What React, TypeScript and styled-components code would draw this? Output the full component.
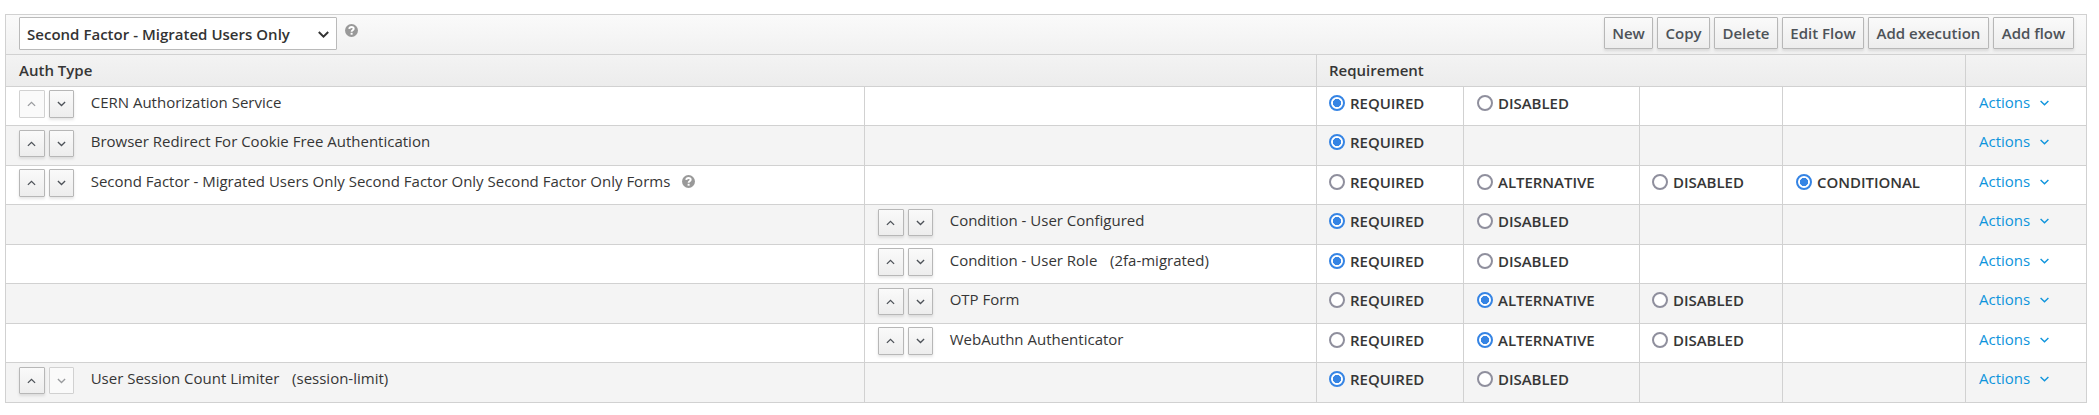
import React from 'react';
import styled, { createGlobalStyle } from 'styled-components';

const GlobalStyle = createGlobalStyle`
  * { box-sizing: border-box; }
  body {
    margin: 0;
    background: #fff;
    color: #363636;
    font: 15px/20px "Open Sans", "Liberation Sans", sans-serif;
  }
`;

const LINE = '#d1d1d1';
const COLUMNS = '859px 452px 147px 176px 143px 183px 121px';

const Page = styled.main`
  padding: 14px 12px 12px 5px;
`;

const Table = styled.section`
  width: 2082px;
  border: 1px solid ${LINE};
  border-width: 1px 0 0 1px;
`;

const Toolbar = styled.header`
  display: flex;
  align-items: flex-start;
  height: 40px;
  padding: 2px 12px 0 13px;
  border: 1px solid ${LINE};
  border-width: 0 1px 1px 0;
  background: linear-gradient(#fafafa, #f1f1f1);
`;

const FlowSelect = styled.button`
  display: flex;
  align-items: center;
  justify-content: space-between;
  width: 318px;
  height: 33px;
  padding: 0 7px 0 7px;
  border: 1px solid #bababa;
  border-radius: 1px;
  background: #fff;
  color: #333;
  font: inherit;
  font-weight: 600;
  letter-spacing: 0.02px;
`;

const SelectArrow = styled.svg`
  display: block;
  width: 11px;
  height: 7px;
  margin-top: 1px;
`;

const HelpMark = styled.svg<{ $top: number; $left: number }>`
  display: block;
  flex: none;
  width: 13px;
  height: 13px;
  margin: ${p => p.$top}px 0 0 ${p => p.$left}px;
`;

const ButtonGroup = styled.div`
  display: flex;
  gap: 4px;
  margin-left: auto;
`;

const Button = styled.button<{ $width: number }>`
  width: ${p => p.$width}px;
  height: 32px;
  padding: 0 0 1px;
  border: 1px solid #b7b7b7;
  border-radius: 1px;
  background: linear-gradient(#fafafa, #ededed);
  box-shadow: 0 2px 3px rgba(3, 3, 3, 0.1);
  color: #4d5258;
  font: inherit;
  font-weight: 600;
  white-space: nowrap;
`;

const HeadRow = styled.div`
  display: grid;
  grid-template-columns: 1311px 649px 121px;
  height: 32px;
  background: linear-gradient(#f3f3f3, #ececec);
`;

const HeadCell = styled.div<{ $pad: number }>`
  padding: 5px 0 0 ${p => p.$pad}px;
  border: 1px solid ${LINE};
  border-width: 0 1px 1px 0;
  font-weight: 600;
`;

const Row = styled.div<{ $even: boolean }>`
  display: grid;
  grid-template-columns: ${COLUMNS};
  height: ${p => (p.$even ? 40 : 39)}px;
  background: ${p => (p.$even ? '#f4f4f4' : '#fff')};
`;

const Cell = styled.div<{ $pad?: number }>`
  display: flex;
  align-items: flex-start;
  padding-left: ${p => p.$pad ?? 13}px;
  border: 1px solid ${LINE};
  border-width: 0 1px 1px 0;
`;

const Arrows = styled.div<{ $even: boolean }>`
  display: grid;
  grid-template-columns: 26px 25px;
  grid-auto-rows: ${p => (p.$even ? 27 : 28)}px;
  column-gap: 4px;
  margin: ${p => (p.$even ? 4 : 3)}px 16.7px 0 0;
`;

const ArrowButton = styled.button`
  display: flex;
  align-items: center;
  justify-content: center;
  padding: 0 0.5px 0 0;
  border: 1px solid #b7b7b7;
  border-radius: 1px;
  background: linear-gradient(#fafafa, #ededed);
  box-shadow: 0 2px 3px rgba(3, 3, 3, 0.1);
  color: #4d5258;

  &:disabled {
    border-color: #d1d1d1;
    background: #fafafa;
    box-shadow: none;
    color: #999b9e;
  }
`;

const Name = styled.span`
  padding-top: 5px;
  white-space: pre;
`;

const Alias = styled.span`
  padding-left: 1px;
`;

const Option = styled.label`
  display: flex;
  gap: 5px;
  padding-top: 6px;
  font-weight: 600;
  letter-spacing: -0.03px;
`;

const Radio = styled.input`
  appearance: none;
  flex: none;
  width: 16px;
  height: 16px;
  margin: 2px 0 0;
  border: 2px solid #8f8f9d;
  border-radius: 50%;
  background: #fff;

  &:checked {
    border-color: #3584e4;
    background: radial-gradient(circle, #3584e4 3.8px, #fff 4.4px);
  }
`;

const ActionsLink = styled.a`
  display: flex;
  gap: 10px;
  padding-top: 5px;
  color: #0e94dc;
`;

const ActionsArrow = styled.svg`
  width: 9px;
  height: 6px;
  margin-top: 8px;
`;

const Angle = ({ up }: { up?: boolean }) => (
  <svg width="9" height="6" viewBox="0 0 9 6" fill="none" stroke="currentColor" strokeWidth="1.3">
    <path d={up ? 'M.9 4.9 4.5 1.4 8.1 4.9' : 'M.9 1 4.5 4.5 8.1 1'} />
  </svg>
);

const Help = ({ top, left }: { top: number; left: number }) => (
  <HelpMark $top={top} $left={left} viewBox="0 0 13 13" aria-label="Help">
    <circle cx="6.5" cy="6.5" r="6.5" fill="#999" />
    <path d="M4.2 4.9C4.4 3.6 5.2 3 6.5 3s2.2.7 2.2 1.8c0 1.5-2.1 1.4-2.1 2.9" fill="none" stroke="#fff" strokeWidth="1.9" />
    <path d="M5.6 8.8h2v1.9h-2z" fill="#fff" />
  </HelpMark>
);

type Execution = {
  name: string;
  alias?: string;
  nested?: boolean;
  help?: boolean;
  first?: boolean;
  last?: boolean;
  options: string[];
  selected: string;
};

const EXECUTIONS: Execution[] = [
  { name: 'CERN Authorization Service', first: true, options: ['REQUIRED', 'DISABLED'], selected: 'REQUIRED' },
  { name: 'Browser Redirect For Cookie Free Authentication', options: ['REQUIRED'], selected: 'REQUIRED' },
  {
    name: 'Second Factor - Migrated Users Only Second Factor Only Second Factor Only Forms',
    help: true,
    options: ['REQUIRED', 'ALTERNATIVE', 'DISABLED', 'CONDITIONAL'],
    selected: 'CONDITIONAL',
  },
  { name: 'Condition - User Configured', nested: true, options: ['REQUIRED', 'DISABLED'], selected: 'REQUIRED' },
  { name: 'Condition - User Role', alias: '2fa-migrated', nested: true, options: ['REQUIRED', 'DISABLED'], selected: 'REQUIRED' },
  { name: 'OTP Form', nested: true, options: ['REQUIRED', 'ALTERNATIVE', 'DISABLED'], selected: 'ALTERNATIVE' },
  { name: 'WebAuthn Authenticator', nested: true, options: ['REQUIRED', 'ALTERNATIVE', 'DISABLED'], selected: 'ALTERNATIVE' },
  { name: 'User Session Count Limiter', alias: 'session-limit', last: true, options: ['REQUIRED', 'DISABLED'], selected: 'REQUIRED' },
];

const TOOLBAR_BUTTONS: [string, number][] = [
  ['New', 49],
  ['Copy', 53],
  ['Delete', 64],
  ['Edit Flow', 82],
  ['Add execution', 121],
  ['Add flow', 81],
];

const OPTION_PADDING = [12, 13, 12, 13];

const ExecutionName = ({ item, even }: { item: Execution; even: boolean }) => (
  <>
    <Arrows $even={even}>
      <ArrowButton disabled={item.first} aria-label="Move up"><Angle up /></ArrowButton>
      <ArrowButton disabled={item.last} aria-label="Move down"><Angle /></ArrowButton>
    </Arrows>
    <Name>
      {item.name}
      {item.alias && <Alias>{`   (${item.alias})`}</Alias>}
    </Name>
    {item.help && <Help top={9} left={12} />}
  </>
);

export default function App() {
  return (
    <Page>
      <GlobalStyle />
      <Table>
        <Toolbar>
          <FlowSelect>
            Second Factor - Migrated Users Only
            <SelectArrow viewBox="0 0 11 7" fill="none" stroke="#333" strokeWidth="2">
              <path d="M.8 1 5.5 5.6 10.2 1" />
            </SelectArrow>
          </FlowSelect>
          <Help top={7} left={8} />
          <ButtonGroup>
            {TOOLBAR_BUTTONS.map(([label, width]) => (
              <Button key={label} $width={width}>{label}</Button>
            ))}
          </ButtonGroup>
        </Toolbar>
        <HeadRow>
          <HeadCell $pad={13}>Auth Type</HeadCell>
          <HeadCell $pad={12}>Requirement</HeadCell>
          <HeadCell $pad={13} />
        </HeadRow>
        {EXECUTIONS.map((item, index) => {
          const even = index % 2 === 1;
          return (
            <Row key={item.name} $even={even}>
              <Cell>{!item.nested && <ExecutionName item={item} even={even} />}</Cell>
              <Cell>{item.nested && <ExecutionName item={item} even={even} />}</Cell>
              {OPTION_PADDING.map((pad, i) => {
                const option = item.options[i];
                return (
                  <Cell key={i} $pad={pad}>
                    {option && (
                      <Option>
                        <Radio type="radio" name={`requirement-${index}`} defaultChecked={option === item.selected} />
                        {option}
                      </Option>
                    )}
                  </Cell>
                );
              })}
              <Cell>
                <ActionsLink>
                  Actions
                  <ActionsArrow viewBox="0 0 9 6" fill="none" stroke="currentColor" strokeWidth="1.4">
                    <path d="M.6 1 4.5 4.8 8.4 1" />
                  </ActionsArrow>
                </ActionsLink>
              </Cell>
            </Row>
          );
        })}
      </Table>
    </Page>
  );
}
